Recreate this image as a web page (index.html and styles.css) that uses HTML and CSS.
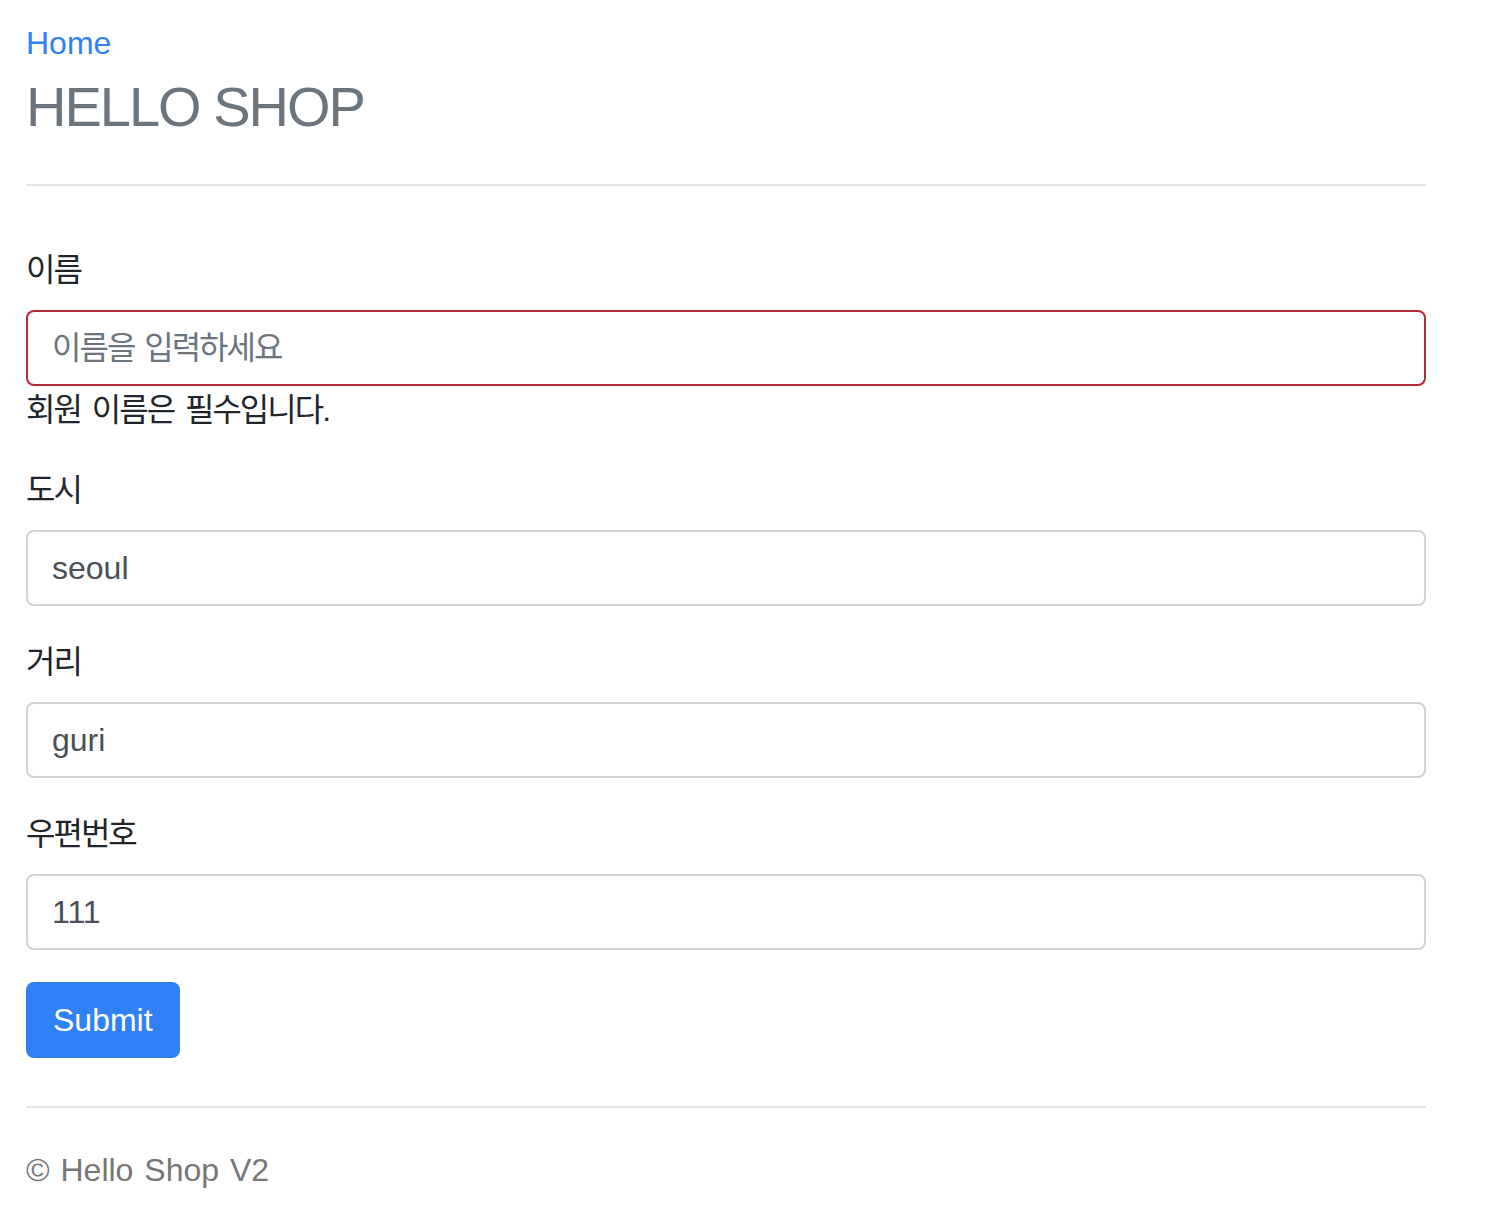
FILE: index.html
```html
<!DOCTYPE html>
<html lang="ko">
<head>
<meta charset="utf-8">
<title>HELLO SHOP</title>
<link rel="stylesheet" href="styles.css">
</head>
<body>
<div class="container">
  <div class="header">
    <ul class="nav">
      <li><a class="nav-link" href="#">Home</a></li>
    </ul>
    <h3 class="brand">HELLO SHOP</h3>
  </div>
  <form class="form">
    <div class="form-group">
      <label class="label ko">이름</label>
      <input class="input field-error" type="text" placeholder="이름을 입력하세요">
      <p class="error ko">회원 이름은 필수입니다.</p>
    </div>
    <div class="form-group">
      <label class="label ko">도시</label>
      <input class="input" type="text" value="seoul">
    </div>
    <div class="form-group">
      <label class="label ko">거리</label>
      <input class="input" type="text" value="guri">
    </div>
    <div class="form-group">
      <label class="label ko">우편번호</label>
      <input class="input" type="text" value="111">
    </div>
    <button class="btn" type="button">Submit</button>
  </form>
  <br>
  <div class="footer">
    <p>© Hello Shop V2</p>
  </div>
</div>
</body>
</html>
```

FILE: styles.css
```css
html, body {
  margin: 0;
  padding: 0;
  background: #ffffff;
}
body {
  font-family: "Liberation Sans", "Noto Sans CJK KR", Arial, sans-serif;
  font-size: 32px;
  line-height: 48px;
  color: #212529;
}
.container {
  width: 1400px;
  padding: 19px 0 0 26px;
}
.header {
  border-bottom: 2px solid #e5e5e5;
}
.nav {
  list-style: none;
  margin: 0;
  padding: 0;
  display: flex;
}
.nav-link {
  color: #3080f8;
  text-decoration: none;
}
.brand {
  margin: 0;
  font-size: 56px;
  line-height: 80px;
  font-weight: 500;
  letter-spacing: -2px;
  color: #6c757d;
  padding-bottom: 37px;
}
.form {
  padding-top: 60px;
}
.form-group {
  margin-bottom: 32px;
}
.ko {
  letter-spacing: -2px;
  word-spacing: 4px;
}
.label {
  display: block;
  margin-bottom: 16px;
}
.input {
  display: block;
  box-sizing: border-box;
  width: 100%;
  height: 76px;
  margin: 0;
  padding: 12px 24px;
  font-family: "Liberation Sans", "Noto Sans CJK KR", Arial, sans-serif;
  font-size: 32px;
  line-height: 48px;
  color: #495057;
  background: #fff;
  border: 2px solid #ced4da;
  border-radius: 8px;
  outline: none;
}
.input::placeholder {
  color: #6c757d;
  opacity: 1;
  letter-spacing: -2px;
  word-spacing: 3px;
}
.field-error {
  border-color: #b52a35;
}
.error {
  margin: 0 0 32px;
}
.btn {
  display: block;
  box-sizing: border-box;
  height: 76px;
  padding: 12px 25px;
  font-family: "Liberation Sans", Arial, sans-serif;
  font-size: 32px;
  line-height: 48px;
  color: #fff;
  background: #3080f8;
  border: 2px solid #3080f8;
  border-radius: 8px;
}
.footer {
  border-top: 2px solid #e5e5e5;
  padding-top: 38px;
  color: #777;
  word-spacing: 2px;
}
.footer p {
  margin: 0 0 32px;
}
```
